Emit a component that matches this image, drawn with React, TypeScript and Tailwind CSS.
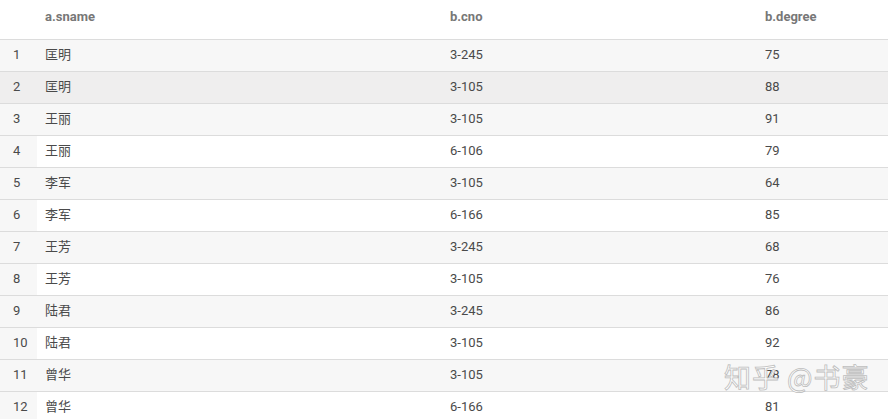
import React from "react";

const rows: [string, string, string][] = [
  ["匡明", "3-245", "75"],
  ["匡明", "3-105", "88"],
  ["王丽", "3-105", "91"],
  ["王丽", "6-106", "79"],
  ["李军", "3-105", "64"],
  ["李军", "6-166", "85"],
  ["王芳", "3-245", "68"],
  ["王芳", "3-105", "76"],
  ["陆君", "3-245", "86"],
  ["陆君", "3-105", "92"],
  ["曾华", "3-105", "78"],
  ["曾华", "6-166", "81"],
];

const App: React.FC = () => {
  return (
    <div className="relative w-[888px] h-[419px] overflow-hidden bg-white font-['Roboto','Noto_Sans_CJK_SC',sans-serif] text-[13px] text-[#4a4a4a]">
      {/* header */}
      <div className="flex h-[40px] items-start border-b border-[#dcdcdc] pt-[7px] font-bold text-[#777]">
        <div className="w-[45px]"></div>
        <div className="w-[405px]">a.sname</div>
        <div className="w-[315px]">b.cno</div>
        <div className="flex-1">b.degree</div>
      </div>
      {rows.map((r, i) => {
        const odd = i % 2 === 0;
        const hover = i === 1;
        const bg = hover ? "bg-[#efeeee]" : odd ? "bg-[#f7f7f7]" : "bg-white";
        return (
          <div key={i} className={`flex h-[32px] items-stretch border-b border-[#dcdcdc] ${bg}`}>
            <div className={`flex w-[37px] items-center pb-[2px] pl-[13px] ${hover ? "bg-[#efeeee]" : "bg-[#f7f7f7]"}`}>
              {i + 1}
            </div>
            <div className="flex w-[413px] items-center pb-[2px] pl-[8px]">{r[0]}</div>
            <div className="flex w-[315px] items-center pb-[2px]">{r[1]}</div>
            <div className="flex flex-1 items-center pb-[2px]">{r[2]}</div>
          </div>
        );
      })}
      {/* watermark */}
      <div className="absolute left-[724px] top-[357px] text-[27px] tracking-[1px] text-white/85 font-['Noto_Sans_CJK_SC',sans-serif] [-webkit-text-stroke:0.8px_#bdbdbd]">
        知乎 @书豪
      </div>
    </div>
  );
};

export default App;
